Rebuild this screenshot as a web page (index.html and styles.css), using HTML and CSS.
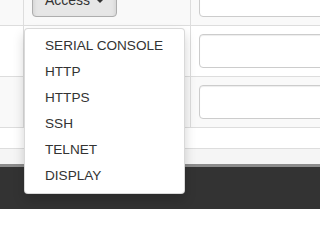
FILE: index.html
```html
<!DOCTYPE html>
<html>
<head>
<meta charset="utf-8">
<link rel="stylesheet" href="styles.css">
</head>
<body>
<div class="page">
  <div class="table">
    <div class="row striped">
      <div class="cell c1"></div>
      <div class="cell c2 has-menu">
        <button class="btn open">Access <span class="caret"></span></button>
        <ul class="dropdown">
          <li><a>SERIAL CONSOLE</a></li>
          <li><a>HTTP</a></li>
          <li><a>HTTPS</a></li>
          <li><a>SSH</a></li>
          <li><a>TELNET</a></li>
          <li><a>DISPLAY</a></li>
        </ul>
      </div>
      <div class="cell c3"><div class="input"></div></div>
    </div>
    <div class="row">
      <div class="cell c1"></div>
      <div class="cell c2"></div>
      <div class="cell c3"><div class="input"></div></div>
    </div>
    <div class="row striped">
      <div class="cell c1"></div>
      <div class="cell c2"></div>
      <div class="cell c3"><div class="input"></div></div>
    </div>
  </div>
  <div class="spacer"></div>
  <div class="strip"></div>
  <div class="footer"></div>
</div>
</body>
</html>
```
FILE: styles.css
```css
html, body {
  margin: 0;
  padding: 0;
  background: #fff;
  overflow: hidden;
}
body {
  font-family: "Liberation Sans", Arial, sans-serif;
  font-size: 14px;
  color: #333;
}
.table {
  margin-top: -25px;
}
.row {
  display: grid;
  grid-template-columns: 24px 167px 1fr;
  border-bottom: 1px solid #ddd;
  height: 51px;
  box-sizing: border-box;
}
.row.striped {
  background: #f9f9f9;
}
.cell {
  padding: 8px;
  box-sizing: border-box;
  border-right: 1px solid #ddd;
}
.c3 {
  border-right: none;
  overflow: hidden;
}
.has-menu {
  position: relative;
}
.btn {
  display: inline-block;
  height: 34px;
  box-sizing: border-box;
  padding: 6px 12px;
  font-family: inherit;
  font-size: 14px;
  line-height: 20px;
  color: #333;
  background: #e6e6e6;
  border: 1px solid #adadad;
  border-radius: 4px;
  box-shadow: inset 0 3px 5px rgba(0,0,0,.125);
  white-space: nowrap;
}
.caret {
  display: inline-block;
  width: 0;
  height: 0;
  margin-left: 2px;
  vertical-align: middle;
  border-top: 4px solid #333;
  border-left: 4px solid transparent;
  border-right: 4px solid transparent;
}
.input {
  width: 200px;
  height: 34px;
  box-sizing: border-box;
  background: #fff;
  border: 1px solid #ccc;
  border-radius: 4px;
  box-shadow: inset 0 1px 1px rgba(0,0,0,.075);
}
.dropdown {
  position: absolute;
  top: 100%;
  left: 0;
  margin: 3px 0 0;
  padding: 4px 0;
  width: 161px;
  box-sizing: border-box;
  list-style: none;
  background: #fff;
  border: 1px solid rgba(0,0,0,.15);
  border-radius: 4px;
  box-shadow: 0 6px 12px rgba(0,0,0,.175);
  z-index: 10;
}
.dropdown li a {
  display: block;
  padding: 3px 20px;
  line-height: 20px;
  font-size: 13.6px;
  color: #333;
  white-space: nowrap;
}
.spacer {
  height: 20px;
}
.strip {
  height: 15px;
  border-top: 1px solid #ddd;
  background: #f5f5f5;
}
.footer {
  height: 42px;
  border-top: 3px solid #8c8c8c;
  background: #333;
}
```
